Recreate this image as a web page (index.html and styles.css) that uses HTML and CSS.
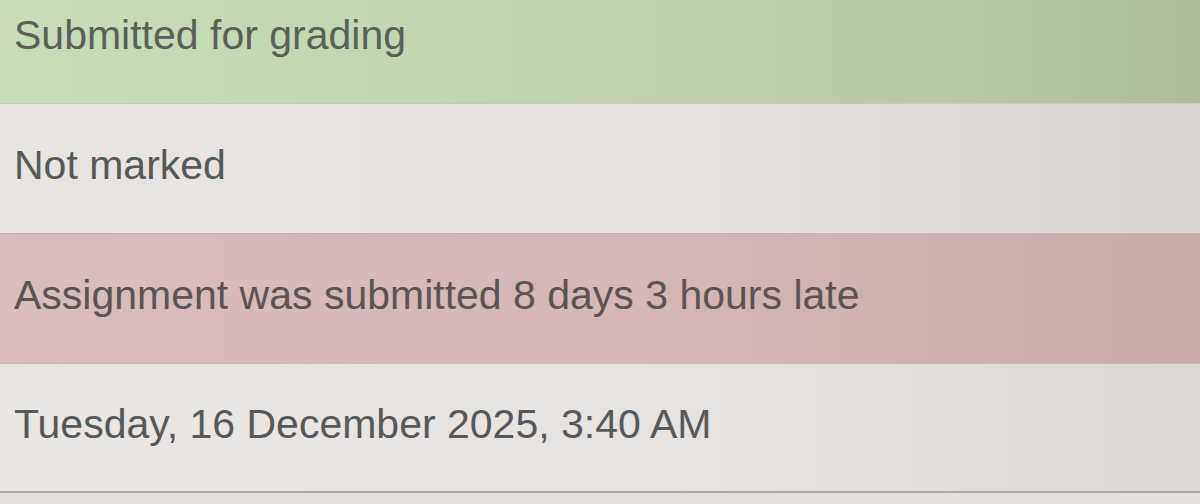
FILE: index.html
```html
<!DOCTYPE html>
<html lang="en">
<head>
    <meta charset="UTF-8">
    <meta name="viewport" content="width=device-width, initial-scale=1.0">
    <title>Submission status</title>
    <link rel="stylesheet" href="styles.css">
</head>
<body>

    <!-- Submission status table -->
    <div class="status-table">
        <div class="status-row submitted">Submitted for grading</div>
        <div class="status-row">Not marked</div>
        <div class="status-row overdue">Assignment was submitted 8 days 3 hours late</div>
        <div class="status-row last">Tuesday, 16 December 2025, 3:40 AM</div>
    </div>

</body>
</html>
```

FILE: styles.css
```css
* {
    margin: 0;
    padding: 0;
    box-sizing: border-box;
}

body, html {
    height: 100%;
    font-family: 'Liberation Sans', Arial, sans-serif;
    background-color: #e3dfdc;
    color: #565958;
    overflow: hidden;
}

.status-table {
    display: flex;
    flex-direction: column;
    margin-top: -27px;
}

.status-row {
    height: 130px;
    display: flex;
    align-items: center;
    padding: 0 14px 6px;
    font-size: 41px;
    border-top: 1px solid #c9c5c1;
    background: linear-gradient(to right, #e8e4e1 0%, #e4e0dc 60%, #d9d4cf 100%);
}

.status-row.submitted {
    border-top: none;
    color: #5b6059;
    background: linear-gradient(to right, #c8dcb9 0%, #c0d3ae 55%, #adbd9c 100%);
}

.status-row.overdue {
    border-top-color: #c2b2ae;
    color: #5a5454;
    background: linear-gradient(to right, #d9bdbc 0%, #d3b6b5 55%, #c8aaa9 100%);
}

.status-row.last {
    border-top-color: #c8b9b6;
    border-bottom: 2px solid #aaa6a2;
    background: linear-gradient(to right, #e9e6e4 0%, #e6e2e0 60%, #ddd8d5 100%);
}
```
